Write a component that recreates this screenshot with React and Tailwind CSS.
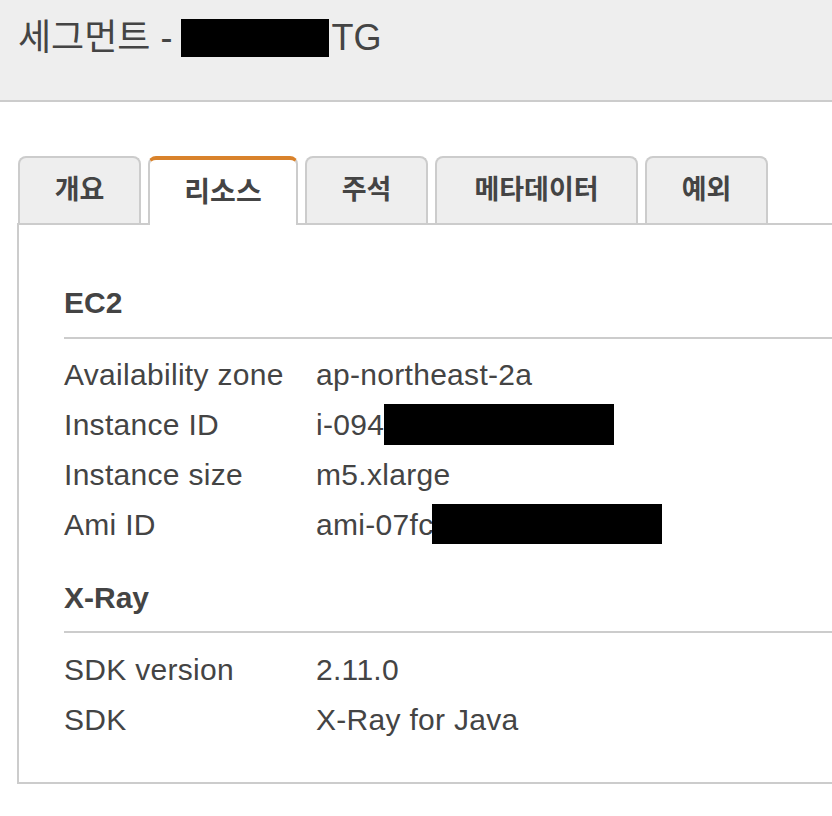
import React from 'react';

const tabs = [
  { label: '개요', w: 'w-[123px]' },
  { label: '리소스', w: 'w-[150px]', active: true },
  { label: '주석', w: 'w-[123px]' },
  { label: '메타데이터', w: 'w-[203px]' },
  { label: '예외', w: 'w-[123px]' },
];

const Redact = ({ className }) => (
  <span className={`inline-block bg-black align-middle ${className}`} />
);

const Row = ({ label, children }) => (
  <div className="flex h-[50px] items-center">
    <div className="w-[252px] shrink-0">{label}</div>
    <div className="flex items-center">{children}</div>
  </div>
);

export default function App() {
  return (
    <div className="w-[832px] h-[816px] overflow-hidden bg-white text-[#444] font-['Liberation_Sans','Noto_Sans_CJK_KR',sans-serif]">
      {/* page header */}
      <div className="h-[102px] bg-[#eeeeee] border-b-2 border-[#cccccc] pl-[18px] pt-[18px]">
        <div className="flex items-center h-[40px] text-[36px] leading-none">
          <span>세그먼트 -</span>
          <span className="ml-[9px] inline-block w-[148px] h-[38px] bg-black" />
          <span className="ml-[2px]">TG</span>
        </div>
      </div>

      {/* tabs */}
      <div className="flex items-end gap-[7px] pl-[18px] mt-[54px] relative z-10">
        {tabs.map(t =>
          t.active ? (
            <div
              key={t.label}
              className={`${t.w} h-[69px] -mb-[2px] bg-white border-2 border-b-0 border-[#cccccc] border-t-4 border-t-[#d9822b] rounded-t-[8px] flex items-center justify-center text-[28px] font-bold`}
            >
              {t.label}
            </div>
          ) : (
            <div
              key={t.label}
              className={`${t.w} h-[67px] bg-[#eeeeee] border-2 border-b-0 border-[#cccccc] rounded-t-[8px] flex items-center justify-center text-[27px] font-bold`}
            >
              {t.label}
            </div>
          )
        )}
      </div>

      {/* panel */}
      <div className="ml-[17px] border-2 border-r-0 border-[#cccccc] pl-[45px] pt-[57px] pb-[38px] text-[30px] tracking-[0.3px]">
        <div className="h-[40px] flex items-center font-bold text-[30px] tracking-normal">EC2</div>
        <div className="mt-[15px] mb-[10px] border-t-2 border-[#cccccc]" />
        <Row label="Availability zone">ap-northeast-2a</Row>
        <Row label="Instance ID">
          <span>i-094</span>
          <Redact className="w-[230px] h-[41px]" />
        </Row>
        <Row label="Instance size">m5.xlarge</Row>
        <Row label="Ami ID">
          <span>ami-07fc</span>
          <Redact className="-ml-[1px] w-[230px] h-[40px]" />
        </Row>

        <div className="mt-[28px] h-[40px] flex items-center font-bold text-[30px] tracking-normal">X-Ray</div>
        <div className="mt-[14px] mb-[11px] border-t-2 border-[#cccccc]" />
        <Row label="SDK version">2.11.0</Row>
        <Row label="SDK">X-Ray for Java</Row>
      </div>
    </div>
  );
}
